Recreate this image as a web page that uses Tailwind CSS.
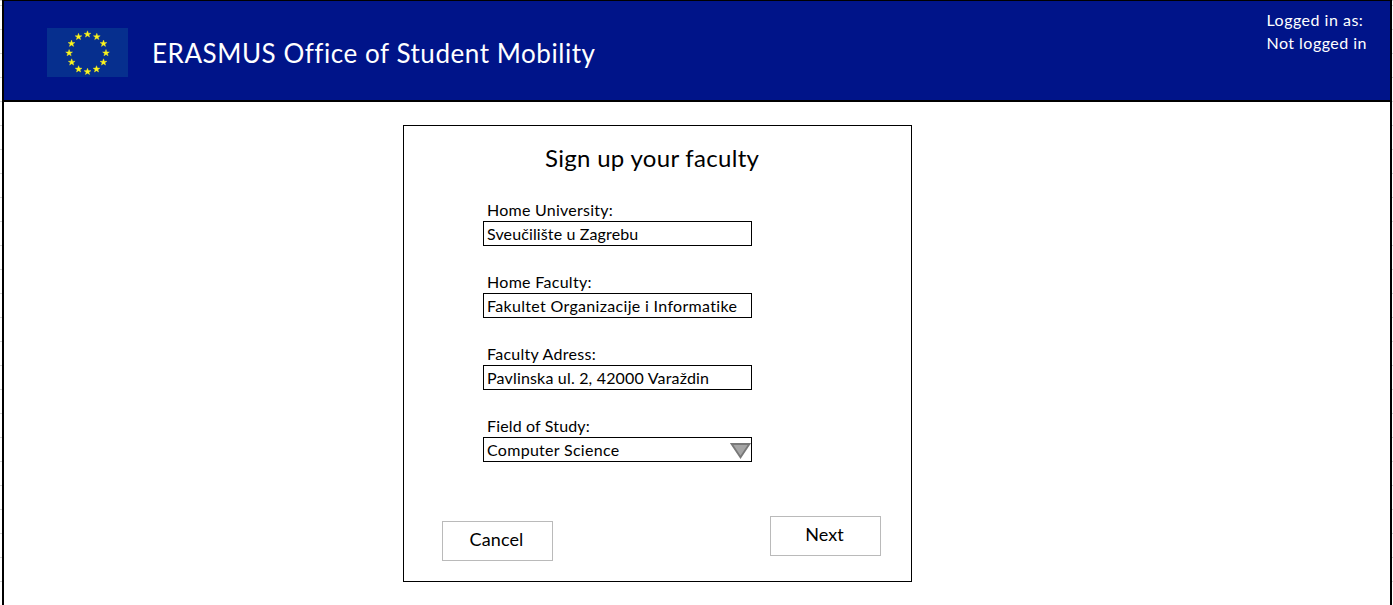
<!DOCTYPE html>
<html lang="en">
<head>
<meta charset="utf-8">
<title>ERASMUS Office of Student Mobility</title>
<script src="https://cdn.jsdelivr.net/npm/@tailwindcss/browser@4"></script>
</head>
<body class="flex h-screen overflow-hidden bg-white font-['Lato',sans-serif] text-base leading-[23px] text-black">
  <div class="w-0.5 shrink-0 bg-[repeating-linear-gradient(to_bottom,#d4d4d4_0_1px,transparent_1px_24px)] bg-[position:0_5px]"></div>

  <div class="flex flex-1 flex-col border-x-2 border-black">
    <header class="flex h-[102px] shrink-0 items-start border-t border-b-2 border-black bg-[#001489] pl-[43px] text-white">
      <svg class="mt-[27px] h-[49px] w-[81px] shrink-0" viewBox="0 0 81 49" aria-label="European Union">
        <defs><path id="star" fill="#fdf51d" stroke="#fdf51d" stroke-width=".4" d="M0-3.5.9-1.1 3.4-1 1.4.5 2.1 2.8 0 1.5-2.1 2.8-1.4.5-3.4-1-.9-1.1Z"/></defs>
        <rect width="81" height="49" fill="#062f8e"/>
        <use href="#star" x="40.5" y="6.3"/><use href="#star" x="49.8" y="8.8"/>
        <use href="#star" x="56.5" y="15.6"/><use href="#star" x="59" y="25"/>
        <use href="#star" x="56.5" y="34.3"/><use href="#star" x="49.5" y="41.2"/>
        <use href="#star" x="40.5" y="43.7"/><use href="#star" x="31.6" y="41.2"/>
        <use href="#star" x="24.7" y="34.3"/><use href="#star" x="22.1" y="25"/>
        <use href="#star" x="24.5" y="15.6"/><use href="#star" x="31.5" y="8.8"/>
      </svg>
      <h1 class="mt-8 ml-6 text-[26px] leading-10 tracking-[0.55px] whitespace-nowrap">ERASMUS Office of Student Mobility</h1>
      <div class="mt-[7px] mr-[23px] ml-auto whitespace-nowrap">
        <p class="tracking-[0.5px]">Logged in as:</p>
        <p class="tracking-[0.48px]">Not logged in</p>
      </div>
    </header>

    <main class="flex pt-[23px] pl-[399px]">
      <form class="h-[457px] w-[509px] border border-black pt-4">
        <h2 class="ml-[141px] text-2xl leading-8 tracking-[0.3px]">Sign up your faculty</h2>

        <div class="mt-6 ml-[79px] flex w-[269px] flex-col gap-6 whitespace-nowrap">
          <div>
            <p class="pl-1 tracking-[0.25px]">Home University:</p>
            <div class="h-[25px] border border-black pl-[3px] tracking-[0.13px]">Sveučilište u Zagrebu</div>
          </div>
          <div>
            <p class="pl-1 tracking-[0.3px]">Home Faculty:</p>
            <div class="h-[25px] border border-black pl-[3px] tracking-[0.32px]">Fakultet Organizacije i Informatike</div>
          </div>
          <div>
            <p class="pl-1 tracking-[0.28px]">Faculty Adress:</p>
            <div class="h-[25px] border border-black pl-[3px] tracking-[0.18px]">Pavlinska ul. 2, 42000 Varaždin</div>
          </div>
          <div>
            <p class="pl-1 tracking-[0.15px]">Field of Study:</p>
            <div class="flex h-[25px] items-start justify-between border border-black pl-[3px] tracking-[0.29px]">
              <span>Computer Science</span>
              <svg class="mt-[5px] h-4 w-[21px]" viewBox="0 0 21 16"><path d="M1.6 1H19.4L10.5 14.3Z" fill="#a5a5a5" stroke="#787878" stroke-width="1.8"/></svg>
            </div>
          </div>
        </div>

        <div class="mt-[54px] flex items-start justify-between pr-[30px] pl-[38px] text-lg">
          <button type="button" class="mt-[5px] h-10 w-[111px] border border-[#bababa] pr-0.5 pb-1 tracking-[0.1px]">Cancel</button>
          <button type="button" class="h-10 w-[111px] border border-[#bababa] pr-0.5 pb-1">Next</button>
        </div>
      </form>
    </main>
  </div>

  <div class="w-px shrink-0 bg-[repeating-linear-gradient(to_bottom,#d4d4d4_0_1px,transparent_1px_24px)] bg-[position:0_5px]"></div>
</body>
</html>
